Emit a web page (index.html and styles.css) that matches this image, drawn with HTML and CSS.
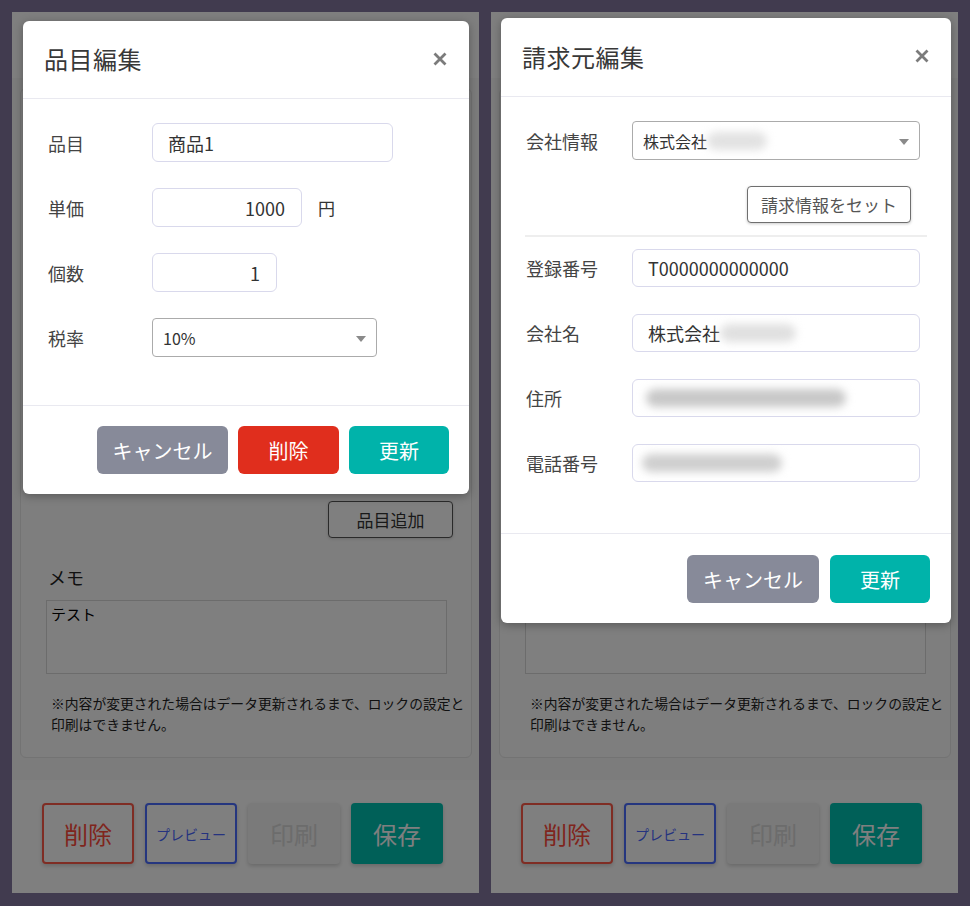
FILE: index.html
```html
<!DOCTYPE html>
<html lang="ja">
<head>
<meta charset="utf-8">
<title>編集</title>
<link rel="stylesheet" href="styles.css">
</head>
<body>
<div class="stage">

  <!-- Left screen -->
  <div class="screen">
    <div class="app">
      <div class="app-header"></div>
      <div class="app-content">
        <div class="card">
          <div class="add-row"><div class="btn-add">品目追加</div></div>
          <div class="memo-label">メモ</div>
          <div class="memo-box">テスト</div>
          <p class="note">※内容が変更された場合はデータ更新されるまで、ロックの設定と印刷はできません。</p>
        </div>
      </div>
      <div class="app-footer">
        <div class="bbtn bbtn-del">削除</div>
        <div class="bbtn bbtn-prev">プレビュー</div>
        <div class="bbtn bbtn-print">印刷</div>
        <div class="bbtn bbtn-save">保存</div>
      </div>
    </div>
    <div class="overlay"></div>
    <div class="modal modal-item">
      <div class="modal-header">
        <h2 class="modal-title">品目編集</h2>
        <svg class="close" width="14" height="14" viewBox="0 0 14 14"><path d="M1.5 1.5 L12.5 12.5 M12.5 1.5 L1.5 12.5" stroke="#7b7b7b" stroke-width="2.8" fill="none"/></svg>
      </div>
      <div class="modal-body">
        <div class="form-row">
          <div class="label">品目</div>
          <div class="field w-name">商品1</div>
        </div>
        <div class="form-row">
          <div class="label">単価</div>
          <div class="field num w-price">1000</div>
          <span class="unit">円</span>
        </div>
        <div class="form-row">
          <div class="label">個数</div>
          <div class="field num w-qty">1</div>
        </div>
        <div class="form-row">
          <div class="label">税率</div>
          <div class="select w-tax"><span>10%</span><svg width="10" height="6" viewBox="0 0 10 6"><path d="M0 0 H10 L5 6 Z" fill="#8a8a8a"/></svg></div>
        </div>
      </div>
      <div class="modal-footer">
        <div class="mbtn mbtn-cancel w-cancel">キャンセル</div>
        <div class="mbtn mbtn-delete">削除</div>
        <div class="mbtn mbtn-update">更新</div>
      </div>
    </div>
  </div>

  <!-- Right screen -->
  <div class="screen">
    <div class="app">
      <div class="app-header"></div>
      <div class="app-content">
        <div class="card">
          <div class="add-row"><div class="btn-add">品目追加</div></div>
          <div class="memo-label">メモ</div>
          <div class="memo-box"></div>
          <p class="note">※内容が変更された場合はデータ更新されるまで、ロックの設定と印刷はできません。</p>
        </div>
      </div>
      <div class="app-footer">
        <div class="bbtn bbtn-del">削除</div>
        <div class="bbtn bbtn-prev">プレビュー</div>
        <div class="bbtn bbtn-print">印刷</div>
        <div class="bbtn bbtn-save">保存</div>
      </div>
    </div>
    <div class="overlay"></div>
    <div class="modal modal-billing">
      <div class="modal-header">
        <h2 class="modal-title">請求元編集</h2>
        <svg class="close" width="14" height="14" viewBox="0 0 14 14"><path d="M1.5 1.5 L12.5 12.5 M12.5 1.5 L1.5 12.5" stroke="#7b7b7b" stroke-width="2.8" fill="none"/></svg>
      </div>
      <div class="modal-body billing-body">
        <div class="form-row wide">
          <div class="label">会社情報</div>
          <div class="select sel-company"><span>株式会社<span class="redact r-sel"></span></span><svg width="10" height="6" viewBox="0 0 10 6"><path d="M0 0 H10 L5 6 Z" fill="#8a8a8a"/></svg></div>
        </div>
        <div class="set-row"><div class="btn-set">請求情報をセット</div></div>
        <hr class="sep">
        <div class="form-row wide">
          <div class="label">登録番号</div>
          <div class="field full">T0000000000000</div>
        </div>
        <div class="form-row wide">
          <div class="label">会社名</div>
          <div class="field full">株式会社<span class="redact r-name"></span></div>
        </div>
        <div class="form-row wide">
          <div class="label">住所</div>
          <div class="field full"><span class="redact r-addr"></span></div>
        </div>
        <div class="form-row wide">
          <div class="label">電話番号</div>
          <div class="field full"><span class="redact r-tel"></span></div>
        </div>
      </div>
      <div class="modal-footer">
        <div class="mbtn mbtn-cancel w-cancel2">キャンセル</div>
        <div class="mbtn mbtn-update">更新</div>
      </div>
    </div>
  </div>

</div>
</body>
</html>
```

FILE: styles.css
```css
* { box-sizing: border-box; }

html, body {
  margin: 0;
  padding: 0;
}

body {
  background: #413b4f;
  font-family: "Noto Sans CJK JP", "Noto Sans", sans-serif;
  color: #333;
}

.stage {
  display: flex;
  gap: 12px;
  padding: 12px;
}

.screen {
  position: relative;
  width: 467px;
  height: 881px;
  overflow: hidden;
  background: #f8f8f8;
}

/* ---------- background app ---------- */
.app {
  display: flex;
  flex-direction: column;
  height: 100%;
}

.app-header {
  height: 66px;
  background: #ffffff;
}

.app-content {
  flex: 1;
  display: flex;
  flex-direction: column;
  padding: 10px 7px 22px 8px;
}

.card {
  flex: 1;
  display: flex;
  flex-direction: column;
  justify-content: flex-end;
  background: #fcfcfc;
  border: 1px solid #e6e6e6;
  border-radius: 6px;
  padding: 0 0 22px 0;
}

.add-row {
  display: flex;
  justify-content: flex-end;
  padding-right: 18px;
}

.btn-add {
  width: 125px;
  height: 37px;
  border: 1.5px solid #555;
  border-radius: 4px;
  background: #fff;
  font-size: 17px;
  color: #333;
  display: flex;
  align-items: center;
  justify-content: center;
  box-shadow: 0 1px 3px rgba(0,0,0,.15);
}

.memo-label {
  margin: 26px 0 0 27px;
  font-size: 18px;
  line-height: 26px;
  color: #222;
}

.memo-box {
  margin: 10px 24px 0 25px;
  height: 74px;
  border: 1px solid #d8d8d8;
  background: #fff;
  font-size: 15px;
  line-height: 22px;
  padding: 2px 4px;
  color: #000;
}

.note {
  margin: 19px 0 0 30px;
  width: 424px;
  font-size: 13.8px;
  line-height: 21px;
  color: #222;
}

.app-footer {
  height: 113px;
  background: #ffffff;
  display: flex;
  align-items: flex-start;
  gap: 11px;
  padding: 23px 0 0 30px;
}

.bbtn {
  width: 92px;
  height: 61px;
  border-radius: 4px;
  display: flex;
  align-items: center;
  justify-content: center;
  font-size: 24px;
  box-shadow: 0 2px 4px rgba(0,0,0,.18);
}

.bbtn-del {
  border: 2px solid #ff5a48;
  color: #ff4a3a;
  background: #fff;
}

.bbtn-prev {
  border: 2px solid #4a6cff;
  color: #4a66ff;
  background: #fff;
  font-size: 14px;
}

.bbtn-print {
  background: #f4f4f4;
  color: #d8d8d8;
}

.bbtn-save {
  background: #00c0b0;
  color: #fff;
}

.overlay {
  position: absolute;
  inset: 0;
  background: rgba(0, 0, 0, 0.5);
}

/* ---------- modal ---------- */
.modal {
  position: absolute;
  background: #fff;
  border-radius: 6px;
  box-shadow: 0 2px 10px rgba(0,0,0,.3);
  display: flex;
  flex-direction: column;
}

.modal-item {
  left: 11px;
  top: 9px;
  width: 446px;
}

.modal-billing {
  left: 10px;
  top: 6px;
  width: 450px;
}

.modal-header {
  height: 78px;
  border-bottom: 1px solid #e9e9f0;
  display: flex;
  align-items: center;
  justify-content: space-between;
  padding: 0 22px 2px 21px;
}

.modal-billing .modal-header {
  height: 79px;
}

.modal-title {
  margin: 0;
  font-size: 24px;
  font-weight: 400;
  color: #383838;
  letter-spacing: 0.5px;
}

.close {
  display: block;
}

.modal-body {
  display: flex;
  flex-direction: column;
  gap: 26px;
  padding: 24px 25px 48px 25px;
}

.form-row {
  display: flex;
  align-items: center;
}

.label {
  width: 104px;
  flex: none;
  font-size: 18px;
  color: #444;
}

.form-row.wide .label {
  width: 106px;
}

.field {
  height: 39px;
  border: 1px solid #d9d9ec;
  border-radius: 6px;
  display: flex;
  align-items: center;
  padding: 0 15px;
  font-size: 18px;
  color: #333;
  white-space: nowrap;
  overflow: hidden;
}

.field.num {
  justify-content: flex-end;
  padding-right: 16px;
}

.w-name { width: 241px; }
.w-price { width: 150px; }
.w-qty { width: 125px; }
.w-tax { width: 225px; }

.unit {
  margin-left: 16px;
  font-size: 17px;
  color: #333;
}

.select {
  height: 39px;
  border: 1px solid #ababab;
  border-radius: 4px;
  display: flex;
  align-items: center;
  justify-content: space-between;
  padding: 0 10px 0 10px;
  font-size: 16px;
  color: #333;
}

.select svg {
  margin-top: 2px;
}

.sel-company {
  width: 289px;
  font-size: 16px;
}

.sel-company > span {
  display: flex;
  align-items: center;
}

.billing-body {
  padding: 24px 31px 51px 25px;
  gap: 0;
}

.billing-body .form-row + .form-row {
  margin-top: 27px;
}

.billing-body .field {
  height: 38px;
}

.field.full {
  width: 289px;
}

.set-row {
  display: flex;
  justify-content: flex-end;
  margin-top: 26px;
  padding-right: 9px;
}

.btn-set {
  width: 164px;
  height: 37px;
  border: 1.5px solid #6f6f6f;
  border-radius: 4px;
  background: #fff;
  font-size: 17px;
  color: #555;
  display: flex;
  align-items: center;
  justify-content: center;
  box-shadow: 0 1px 3px rgba(0,0,0,.2);
}

.sep {
  margin: 12px -7px 12px -1px;
  border: 0;
  border-top: 2px solid #eeeeee;
}

.redact {
  display: inline-block;
  height: 18px;
  border-radius: 9px;
  background: #d2d2d2;
  filter: blur(4px);
}

.r-sel { width: 60px; background: #e2e2e2; }
.r-name { width: 76px; background: #e0e0e0; }
.r-addr { width: 200px; margin-left: -2px; background: #c8c8c8; }
.r-tel { width: 140px; margin-left: -6px; background: #cfcfcf; }

.modal-footer {
  border-top: 1px solid #e9e9f0;
  display: flex;
  justify-content: flex-end;
  gap: 10px;
  padding: 20px 20px 20px 20px;
}

.modal-billing .modal-footer {
  gap: 11px;
  padding: 21px 21px 20px 21px;
}

.mbtn {
  height: 48px;
  width: 100px;
  border-radius: 6px;
  display: flex;
  align-items: center;
  justify-content: center;
  font-size: 20px;
  color: #fff;
}

.mbtn-cancel { background: #878a99; }
.w-cancel { width: 131px; }
.w-cancel2 { width: 132px; }
.mbtn-delete { background: #e02e1d; width: 101px; }
.mbtn-update { background: #00b3aa; }
```
